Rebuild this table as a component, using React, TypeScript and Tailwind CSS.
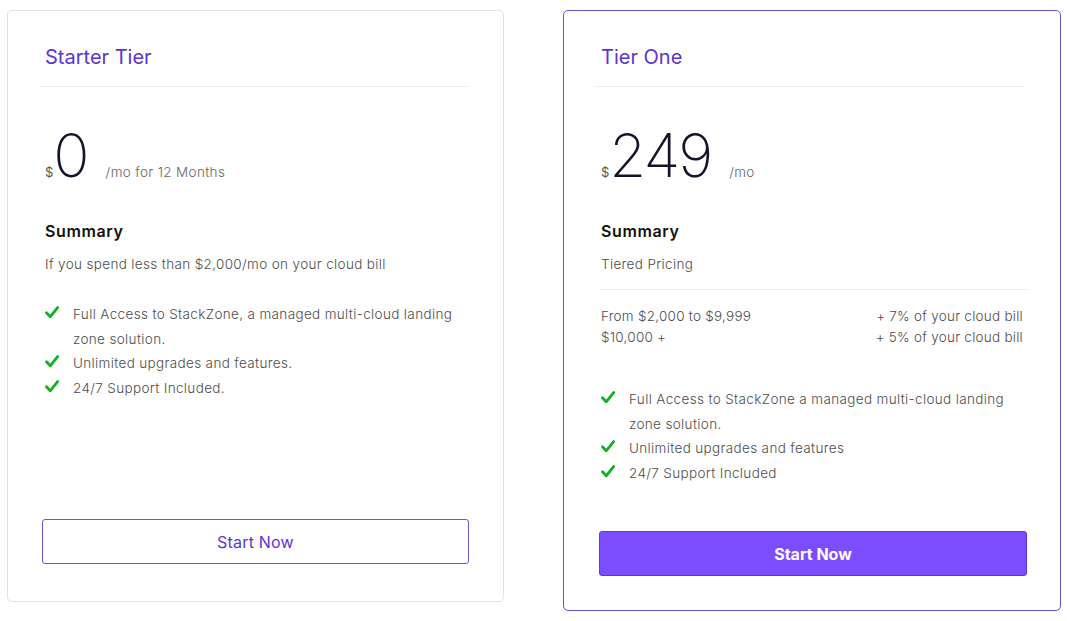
import React from 'react';

const Check = () => (
  <svg width="14" height="13" viewBox="0 0 14 13" className="shrink-0 mt-[4px]">
    <path d="M1.5 6.8 L5.2 10.8 L12.6 1.6" fill="none" stroke="#12b022" strokeWidth="2.8" strokeLinecap="round" strokeLinejoin="round" />
  </svg>
);

function Features({ items }: { items: string[] }) {
  return (
    <ul className="text-[13.5px] tracking-[0.35px] font-light text-[#4d4d4d] leading-[24.5px]">
      {items.map((t) => (
        <li key={t} className="flex items-start">
          <Check />
          <span className="pl-[14px]">{t}</span>
        </li>
      ))}
    </ul>
  );
}

export default function App() {
  return (
    <div className="min-h-screen bg-white flex items-start gap-[59px] pl-[7px] pt-[10px] font-['Inter',sans-serif]">
      {/* STARTER */}
      <div className="w-[497px] h-[592px] border border-[#e2e2e2] rounded-[5px] flex flex-col pl-[31px] pr-[35px] pt-[32px] pb-[37px]">
        <div className="pl-[6px] pb-[15px] border-b border-[#ececec] text-[20px] leading-[28px] text-[#5b34d6]">Starter Tier</div>

        <div className="pl-[6px] mt-[38px] flex items-baseline leading-none">
          <span className="text-[13px] text-[#555]">$</span>
          <span className="text-[60px] font-extralight text-[#14142b] tracking-[-2px]">0</span>
          <span className="text-[13.5px] tracking-[0.35px] font-light text-[#666] ml-[18px]">/mo for 12 Months</span>
        </div>

        <div className="pl-[6px] mt-[36px] text-[16px] tracking-[0.6px] leading-[20px] font-semibold text-[#111]">Summary</div>
        <div className="pl-[6px] mt-[13px] text-[13.5px] tracking-[0.35px] leading-[20px] font-light text-[#4d4d4d]">If you spend less than $2,000/mo on your cloud bill</div>

        <div className="pl-[6px] mt-[28px]">
          <Features items={['Full Access to StackZone, a managed multi-cloud landing zone solution.', 'Unlimited upgrades and features.', '24/7 Support Included.']} />
        </div>

        <button className="mt-auto ml-[3px] w-[427px] h-[45px] border border-[#7352dc] rounded-[3px] text-[16px] tracking-[0.2px] text-[#5b34d6] bg-white">Start Now</button>
      </div>

      {/* TIER ONE */}
      <div className="w-[498px] h-[601px] border border-[#6a4fd4] rounded-[5px] flex flex-col pl-[31px] pr-[37px] pt-[32px] pb-[34px]">
        <div className="pl-[6px] pb-[15px] border-b border-[#ececec] text-[20px] leading-[28px] text-[#5b34d6]">Tier One</div>

        <div className="pl-[6px] mt-[38px] flex items-baseline leading-none">
          <span className="text-[13px] text-[#555]">$</span>
          <span className="text-[60px] font-extralight text-[#14142b] tracking-[-2px]">249</span>
          <span className="text-[13.5px] tracking-[0.35px] font-light text-[#666] ml-[18px]">/mo</span>
        </div>

        <div className="pl-[6px] mt-[36px] text-[16px] tracking-[0.6px] leading-[20px] font-semibold text-[#111]">Summary</div>
        <div className="pl-[6px] mt-[13px] text-[13.5px] tracking-[0.35px] leading-[20px] font-light text-[#4d4d4d]">Tiered Pricing</div>

        <div className="ml-[4px] -mr-[5px] mt-[15px] border-t border-[#ececec]" />

        <div className="pl-[6px] mt-[16px] text-[13.5px] tracking-[0.25px] leading-[21px] font-light text-[#4d4d4d]">
          <div className="flex justify-between"><span>From $2,000 to $9,999</span><span>+ 7% of your cloud bill</span></div>
          <div className="flex justify-between"><span>$10,000 +</span><span>+ 5% of your cloud bill</span></div>
        </div>

        <div className="pl-[6px] mt-[39px]">
          <Features items={['Full Access to StackZone a managed multi-cloud landing zone solution.', 'Unlimited upgrades and features', '24/7 Support Included']} />
        </div>

        <button className="mt-auto ml-[4px] -mr-[4px] h-[45px] border border-[#5f33e6] rounded-[3px] bg-[#7c4dff] text-[16px] font-bold text-white">Start Now</button>
      </div>
    </div>
  );
}
